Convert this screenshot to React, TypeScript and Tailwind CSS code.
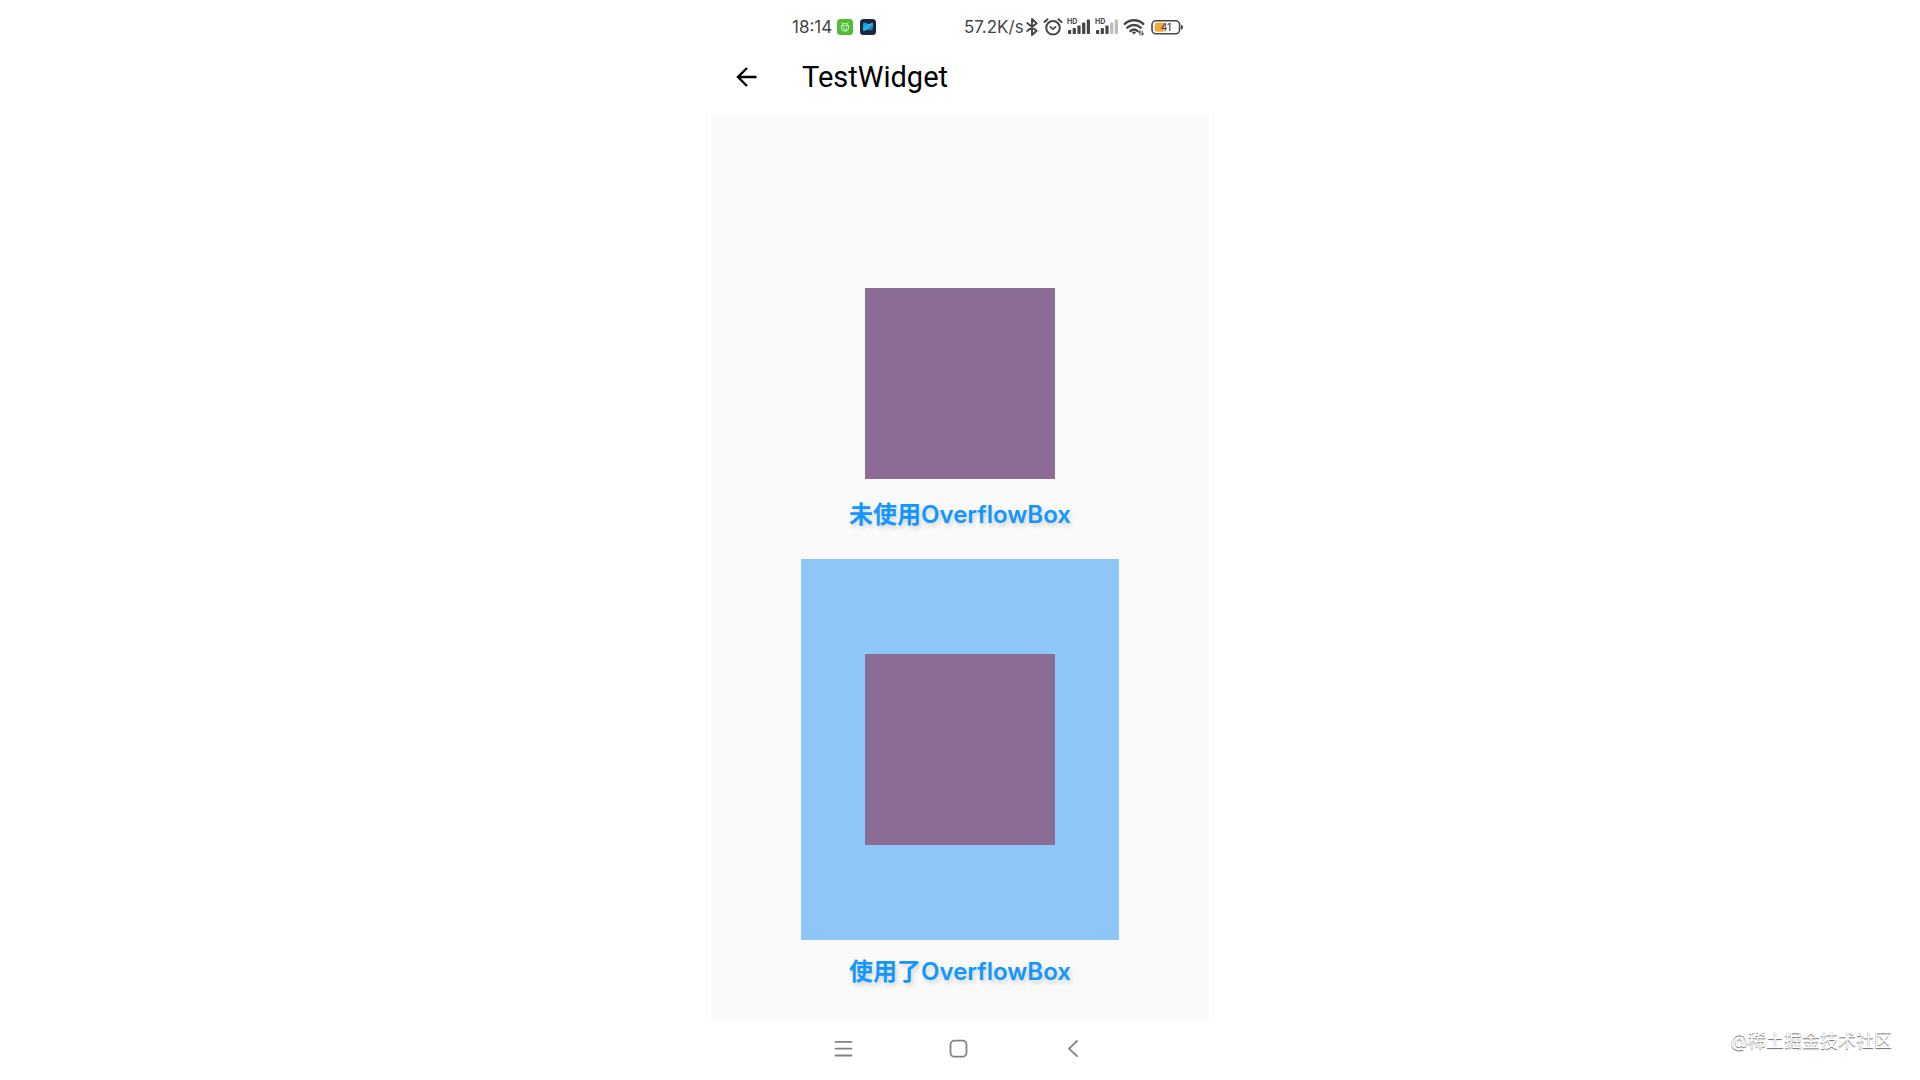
import React from 'react';

const BluetoothIcon: React.FC = () => (
  <svg className="w-3 h-5" viewBox="0 0 12 20" fill="none" stroke="currentColor" strokeWidth="1.9" strokeLinejoin="round" strokeLinecap="round" aria-hidden="true">
    <path d="M1.2 6 L10.6 13.8 L6 18 V2 L10.6 6.2 L1.2 14" />
  </svg>
);

const AlarmIcon: React.FC = () => (
  <svg className="w-5 h-5" viewBox="0 0 20 20" fill="none" stroke="currentColor" strokeWidth="2" strokeLinecap="round" strokeLinejoin="round" aria-hidden="true">
    <circle cx="10" cy="10.8" r="6.8" />
    <path d="M7.4 9.8 L10 12.2 L12.6 9.8" strokeWidth="1.7" />
    <path d="M1.4 5 L4.6 2.2 M18.6 5 L15.4 2.2" strokeWidth="1.9" />
  </svg>
);

const SignalIcon: React.FC<{ level: number }> = ({ level }) => (
  <svg className="w-6 h-5" viewBox="0 0 24 20" aria-hidden="true">
    <text x="0" y="7" fontSize="7" fontWeight="700" fontFamily="Inter, sans-serif" fill="currentColor">HD</text>
    {[13, 11, 8.5, 5.5, 2.5].map((top, i) => (
      <rect key={top} x={1 + i * 4.7} y={top} width="3.2" height={17 - top} rx="0.8" fill={i < level ? 'currentColor' : '#bcbcbc'} />
    ))}
  </svg>
);

const WifiIcon: React.FC = () => (
  <svg className="w-[22px] h-5" viewBox="0 0 22 20" fill="none" stroke="currentColor" strokeLinecap="round" aria-hidden="true">
    <path d="M1.8 6.8 C7 2 15 2 20.2 6.8" strokeWidth="2.5" />
    <path d="M4.4 10.6 C8.2 7.2 13.8 7.2 17.6 10.6" strokeWidth="2.5" />
    <path d="M7.4 14 C9.5 12.2 12.5 12.2 14.6 14" strokeWidth="2.4" />
    <path d="M8.8 15.2 Q11 13.8 13.2 15.2 L11 17.6 Z" fill="currentColor" stroke="none" />
    <path d="M17 17.8 V14.2 L15.8 15.4 M19.2 14.2 V17.8 L20.4 16.6" strokeWidth="1.1" />
  </svg>
);

const BatteryIcon: React.FC = () => (
  <svg className="w-8 h-5" viewBox="0 0 32 20" aria-hidden="true">
    <rect x="1" y="3.8" width="27.6" height="13" rx="4" fill="none" stroke="currentColor" strokeWidth="1.6" />
    <path d="M6 5.8 H13 V14.8 H6 Q3.6 14.8 3.6 12.4 V8.2 Q3.6 5.8 6 5.8 Z" fill="#f5a938" />
    <path d="M30 7.8 Q32 8.2 32 10.3 Q32 12.4 30 12.8 Z" fill="currentColor" />
    <text x="15" y="13.9" textAnchor="middle" fontSize="10" fontWeight="500" fontFamily="Inter, sans-serif" fill="currentColor">41</text>
  </svg>
);

const StatusBar: React.FC = () => (
  <div className="flex items-center justify-between h-[54px] pl-[81px] pr-[26px] text-[#454545]">
    <div className="flex items-center">
      <span className="w-[45px] text-[17px] leading-5">18:14</span>
      <svg className="w-4 h-4 mr-[7px]" viewBox="0 0 16 16" aria-hidden="true">
        <rect width="16" height="16" rx="3.5" fill="#50bd38" />
        <g fill="none" stroke="#d9f4d1" strokeWidth="0.9" strokeLinecap="round">
          <path d="M4.5 6.8 H11.5 M4.5 6.8 V9 Q4.5 12.3 8 12.3 Q11.5 12.3 11.5 9 V6.8 M5 6.6 Q5.4 4.4 8 4.4 Q10.6 4.4 11 6.6 M5.6 4.6 L4.9 3.6 M10.4 4.6 L11.1 3.6" />
          <path d="M6.6 8.8 V9 M9.4 8.8 V9 M6.8 10.5 H9.2" />
        </g>
      </svg>
      <svg className="w-4 h-4" viewBox="0 0 16 16" aria-hidden="true">
        <defs>
          <linearGradient id="flag" x1="0" y1="0" x2="1" y2="1">
            <stop offset="0" stopColor="#1786ee" />
            <stop offset="0.5" stopColor="#27b9e8" />
            <stop offset="1" stopColor="#123d75" />
          </linearGradient>
        </defs>
        <rect width="16" height="16" rx="3.5" fill="#1b2740" />
        <path d="M3 4.4 Q4.4 2.8 6 4 Q8.6 6 10.4 4.4 Q13 3 13 5 V10.6 Q12.6 12.6 10.4 11.6 Q7.6 10 5.6 11.4 Q3 13 3 10.6 Z" fill="url(#flag)" />
      </svg>
    </div>
    <div className="flex items-center">
      <span className="w-[62px] text-[17px] leading-5">57.2K/s</span>
      <BluetoothIcon />
      <div className="flex items-center gap-1 ml-[5px]">
        <AlarmIcon />
        <SignalIcon level={5} />
        <SignalIcon level={3} />
        <WifiIcon />
      </div>
      <div className="flex ml-1.5">
        <BatteryIcon />
      </div>
    </div>
  </div>
);

const AppBar: React.FC = () => (
  <header className="flex items-center h-[59px] pl-6 pb-[13px] text-black">
    <button type="button" aria-label="Back" className="w-[67px]">
      <svg className="w-6 h-6" viewBox="0 0 24 24" fill="none" stroke="currentColor" strokeWidth="2.4" aria-hidden="true">
        <path d="M21.5 12 H3 M12 3 L3 12 L12 21" />
      </svg>
    </button>
    <h1 className="font-[Roboto,sans-serif] text-[29px] leading-8">TestWidget</h1>
  </header>
);

const Caption: React.FC<{ children: string }> = ({ children }) => (
  <p className="text-2xl leading-8 font-semibold text-[#1296ff] text-shadow-[2px_3px_4px_rgb(0_0_0/0.16)]">
    {children}
  </p>
);

const PurpleBox: React.FC = () => <div className="w-[190px] h-[191px] bg-[#8b6c94]"></div>;

const NavBar: React.FC = () => (
  <nav className="flex justify-center gap-[91px] h-[60px] pt-4 pr-[5px] text-[#828282]">
    <button type="button" aria-label="Recent apps" className="w-6 h-6">
      <svg className="w-6 h-6" viewBox="0 0 24 24" fill="none" stroke="currentColor" strokeWidth="1.8" strokeLinecap="round" aria-hidden="true">
        <path d="M4.5 5.8 H20.5 M4.5 12.6 H20.5 M4.5 19.5 H20.5" />
      </svg>
    </button>
    <button type="button" aria-label="Home" className="w-6 h-6">
      <svg className="w-6 h-6" viewBox="0 0 24 24" fill="none" stroke="currentColor" strokeWidth="1.8" aria-hidden="true">
        <rect x="4.5" y="4.7" width="16" height="16" rx="4" />
      </svg>
    </button>
    <button type="button" aria-label="Back" className="w-6 h-6">
      <svg className="w-6 h-6" viewBox="0 0 24 24" fill="none" stroke="currentColor" strokeWidth="1.8" strokeLinecap="round" strokeLinejoin="round" aria-hidden="true">
        <path d="M16 5 L8 12.6 L16 20.2" />
      </svg>
    </button>
  </nav>
);

const App: React.FC = () => {
  return (
    <div className="relative flex justify-center min-h-screen bg-white font-['Inter','Noto_Sans_CJK_SC',sans-serif]">
      <div className="flex flex-col w-full max-w-[498px]">
        <StatusBar />
        <AppBar />
        <main className="flex flex-col items-center grow pt-[175px] bg-[#fafafa]">
          <PurpleBox />
          <div className="pt-5 pb-7">
            <Caption>未使用OverflowBox</Caption>
          </div>
          <div className="flex items-center justify-center w-[318px] h-[381px] bg-[#8ec7f7]">
            <PurpleBox />
          </div>
          <div className="pt-4">
            <Caption>使用了OverflowBox</Caption>
          </div>
        </main>
        <NavBar />
      </div>

      {/* Watermark */}
      <span className="absolute bottom-6 right-7 text-lg leading-[30px] text-white text-shadow-[0_1px_1px_rgb(0_0_0/0.6)]">
        @稀土掘金技术社区
      </span>
    </div>
  );
};

export default App;
